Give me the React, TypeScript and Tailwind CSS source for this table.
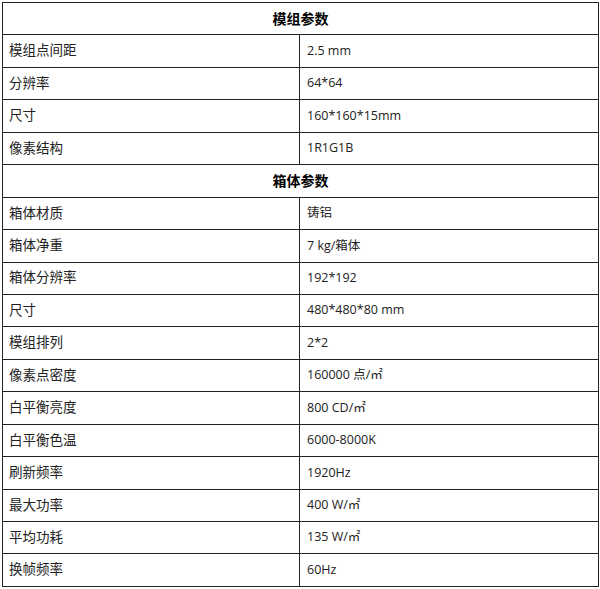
import React from "react";

type Row = { h?: string; k?: string; v?: string };

const rows: Row[] = [
  { h: "模组参数" },
  { k: "模组点间距", v: "2.5 mm" },
  { k: "分辨率", v: "64*64" },
  { k: "尺寸", v: "160*160*15mm" },
  { k: "像素结构", v: "1R1G1B" },
  { h: "箱体参数" },
  { k: "箱体材质", v: "铸铝" },
  { k: "箱体净重", v: "7 kg/箱体" },
  { k: "箱体分辨率", v: "192*192" },
  { k: "尺寸", v: "480*480*80 mm" },
  { k: "模组排列", v: "2*2" },
  { k: "像素点密度", v: "160000 点/㎡" },
  { k: "白平衡亮度", v: "800 CD/㎡" },
  { k: "白平衡色温", v: "6000-8000K" },
  { k: "刷新频率", v: "1920Hz" },
  { k: "最大功率", v: "400 W/㎡" },
  { k: "平均功耗", v: "135 W/㎡" },
  { k: "换帧频率", v: "60Hz" },
];

const font = {
  fontFamily:
    '"Open Sans", "Noto Sans CJK SC", sans-serif',
};

export default function App() {
  return (
    <div className="w-[600px] h-[589px] bg-white pt-[2px] pl-[2px]">
      <table
        className="w-[596px] h-[585px] border-collapse border border-[#222] text-[12.5px] text-[#222] table-fixed"
        style={font}
      >
        <colgroup>
          <col className="w-[297px]" />
          <col className="w-[299px]" />
        </colgroup>
        <tbody>
          {rows.map((r, i) =>
            r.h ? (
              <tr key={i} className="h-[32.4px]">
                <td
                  colSpan={2}
                  className="border border-[#222] text-center font-bold text-[14px] text-black p-0 leading-none"
                >
                  {r.h}
                </td>
              </tr>
            ) : (
              <tr key={i} className="h-[32.4px]">
                <td className="border border-[#222] pl-[6px] p-0 leading-none text-[13.5px]">
                  {r.k}
                </td>
                <td className="border border-[#222] pl-[7px] p-0 leading-none">
                  {r.v}
                </td>
              </tr>
            )
          )}
        </tbody>
      </table>
    </div>
  );
}
